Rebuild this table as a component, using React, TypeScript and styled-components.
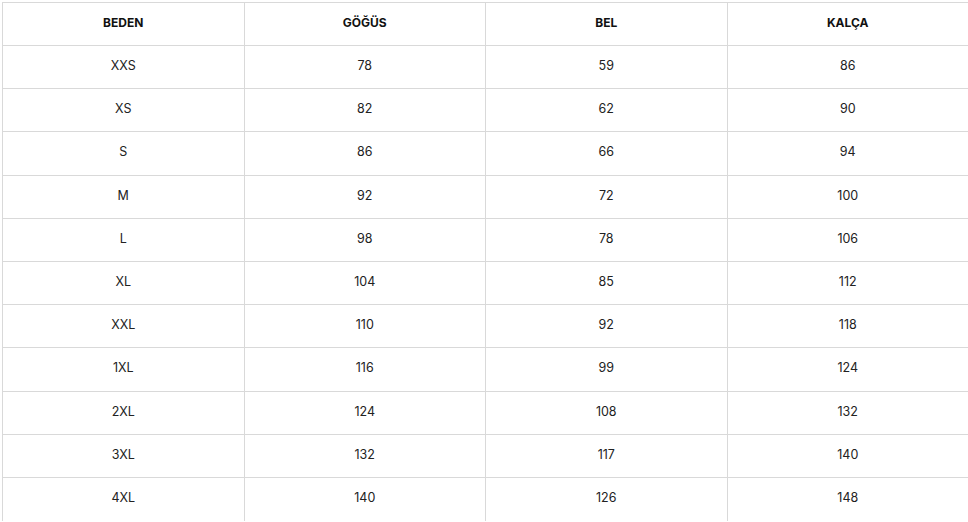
import React from 'react';
import styled, { createGlobalStyle } from 'styled-components';

const GlobalStyle = createGlobalStyle`
  html, body {
    margin: 0;
    padding: 0;
    background: #fff;
  }
  body {
    font-family: Inter, "Noto Sans", sans-serif;
    color: #1a1a1a;
  }
`;

const Wrapper = styled.div`
  padding: 2px 0 0 2px;
  width: 968px;
  box-sizing: border-box;
  overflow: hidden;
`;

const Table = styled.table`
  width: 967px;
  border-collapse: collapse;
  table-layout: fixed;
`;

const HeadCell = styled.th`
  height: 43px;
  padding: 0 0 4px;
  box-sizing: border-box;
  border: 1px solid #d9d9d9;
  font-size: 12px;
  font-weight: 700;
  color: #111;
  text-align: center;
  vertical-align: middle;
`;

const Row = styled.tr`
  &:last-child td {
    border-bottom: none;
  }
`;

const Cell = styled.td`
  height: 43.2px;
  padding: 0 0 3px;
  box-sizing: border-box;
  border: 1px solid #d9d9d9;
  font-size: 12.5px;
  font-weight: 400;
  color: #222;
  text-align: center;
  vertical-align: middle;
`;

const headers = ['BEDEN', 'GÖĞÜS', 'BEL', 'KALÇA'];

const rows: string[][] = [
  ['XXS', '78', '59', '86'],
  ['XS', '82', '62', '90'],
  ['S', '86', '66', '94'],
  ['M', '92', '72', '100'],
  ['L', '98', '78', '106'],
  ['XL', '104', '85', '112'],
  ['XXL', '110', '92', '118'],
  ['1XL', '116', '99', '124'],
  ['2XL', '124', '108', '132'],
  ['3XL', '132', '117', '140'],
  ['4XL', '140', '126', '148'],
];

export default function App() {
  return (
    <>
      <GlobalStyle />
      <Wrapper>
        <Table>
          <thead>
            <tr>
              {headers.map((h) => (
                <HeadCell key={h}>{h}</HeadCell>
              ))}
            </tr>
          </thead>
          <tbody>
            {rows.map((r) => (
              <Row key={r[0]}>
                {r.map((v, i) => (
                  <Cell key={i}>{v}</Cell>
                ))}
              </Row>
            ))}
          </tbody>
        </Table>
      </Wrapper>
    </>
  );
}
